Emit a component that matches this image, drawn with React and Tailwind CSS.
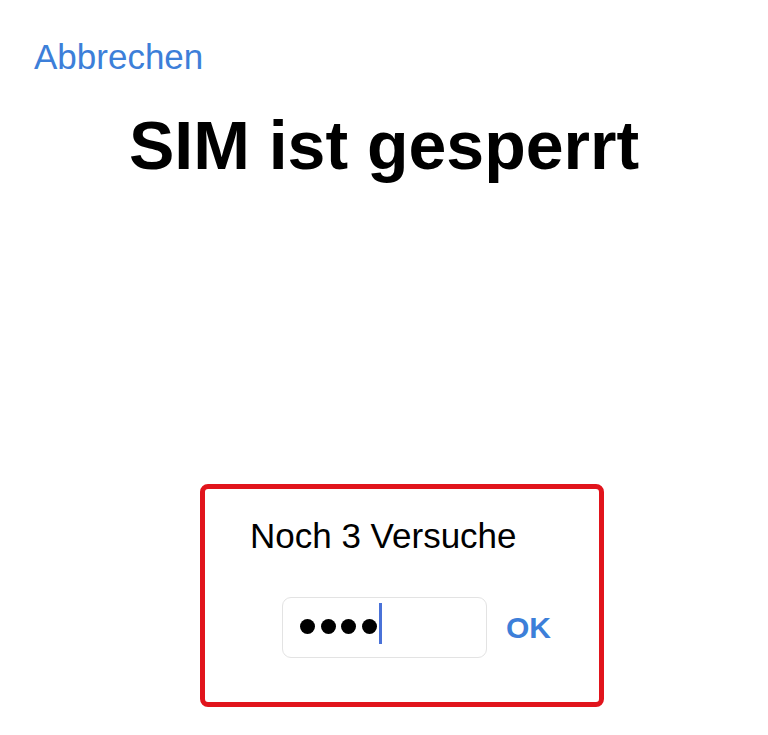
import React from 'react'

const blue = 'text-[#3d7fd9]'

function PinField({ digits = 4 }) {
  return (
    <div className="flex h-[61px] w-[205px] items-center rounded-[9px] border border-[#e3e3e3] bg-white pl-[17px]">
      <div className="mb-[3px] flex gap-[5.5px]">
        {Array.from({ length: digits }).map((_, i) => (
          <span key={i} className="block h-[15px] w-[15px] rounded-full bg-black" />
        ))}
      </div>
      <span className="mb-[8px] ml-[2px] block h-[41px] w-[3px] bg-[#4a72d8]" />
    </div>
  )
}

export default function App() {
  return (
    <div className="min-h-[735px] bg-white font-['Liberation_Sans',Arial,sans-serif]">
      <div className="pl-[34px] pt-[39px]">
        <button className={'text-[35px] leading-none ' + blue}>Abbrechen</button>
      </div>

      <h1 className="mt-[35px] text-center text-[68px] font-bold leading-none text-black">SIM ist gesperrt</h1>

      <div className="ml-[200px] mt-[305px] h-[223px] w-[404px] rounded-[8px] border-[5px] border-[#e1141c] pl-[45px] pt-[29px]">
        <p className="text-[35px] leading-none text-black">Noch 3 Versuche</p>
        <div className="ml-[32px] mt-[44px] flex items-center">
          <PinField />
          <button className={'ml-[19px] text-[30px] font-semibold leading-none ' + blue}>OK</button>
        </div>
      </div>
    </div>
  )
}
